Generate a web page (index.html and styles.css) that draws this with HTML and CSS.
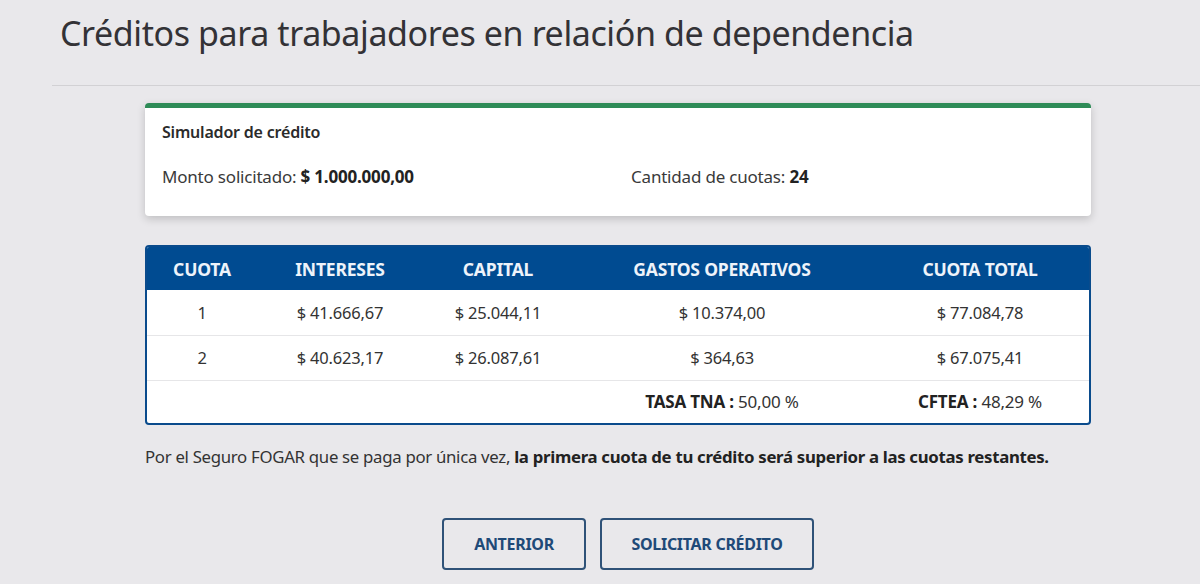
FILE: index.html
```html
<!DOCTYPE html>
<html lang="es">
<head>
<meta charset="utf-8">
<title>Créditos para trabajadores en relación de dependencia</title>
<link rel="stylesheet" href="styles.css">
</head>
<body>
<div class="page">
  <h1 class="title">Créditos para trabajadores en relación de dependencia</h1>
  <hr class="divider">
  <div class="content">
    <section class="card">
      <h2 class="card-title">Simulador de crédito</h2>
      <div class="card-row">
        <div class="field">Monto solicitado: <strong>$ 1.000.000,00</strong></div>
        <div class="field">Cantidad de cuotas: <strong>24</strong></div>
      </div>
    </section>

    <div class="table-wrap">
      <table class="plan">
        <thead>
          <tr>
            <th class="c1">CUOTA</th>
            <th class="c2">INTERESES</th>
            <th class="c3">CAPITAL</th>
            <th class="c4">GASTOS OPERATIVOS</th>
            <th class="c5">CUOTA TOTAL</th>
          </tr>
        </thead>
        <tbody>
          <tr>
            <td>1</td>
            <td>$ 41.666,67</td>
            <td>$ 25.044,11</td>
            <td>$ 10.374,00</td>
            <td>$ 77.084,78</td>
          </tr>
          <tr>
            <td>2</td>
            <td>$ 40.623,17</td>
            <td>$ 26.087,61</td>
            <td>$ 364,63</td>
            <td>$ 67.075,41</td>
          </tr>
          <tr class="totals">
            <td></td>
            <td></td>
            <td></td>
            <td><strong>TASA TNA :</strong> 50,00 %</td>
            <td><strong>CFTEA :</strong> 48,29 %</td>
          </tr>
        </tbody>
      </table>
    </div>

    <p class="note">Por el Seguro FOGAR que se paga por única vez, <strong>la primera cuota de tu crédito será superior a las cuotas restantes.</strong></p>

    <div class="actions">
      <button class="btn btn-prev" type="button">ANTERIOR</button>
      <button class="btn btn-next" type="button">SOLICITAR CRÉDITO</button>
    </div>
  </div>
</div>
</body>
</html>
```

FILE: styles.css
```css
* { box-sizing: border-box; }

html, body {
  margin: 0;
  padding: 0;
  background: #e9e8eb;
}

body {
  font-family: "Noto Sans", "Open Sans", sans-serif;
  color: #333;
}

.page {
  padding-left: 52px;
}

.title {
  margin: 0;
  padding: 10px 0 0 8px;
  height: 85px;
  font-size: 34px;
  font-weight: 400;
  color: #333236;
  letter-spacing: -0.4px;
}

.divider {
  margin: 0;
  border: 0;
  border-top: 1px solid #d2d1d4;
}

.content {
  width: 946px;
  margin-left: 93px;
  padding-top: 17px;
}

.card {
  background: #fff;
  border-top: 5px solid #2e8b57;
  border-radius: 4px;
  box-shadow: 0 3px 8px rgba(0,0,0,0.18);
  padding: 13px 17px 0 17px;
  height: 113px;
}

.card-title {
  margin: 0;
  font-size: 16px;
  font-weight: 600;
  color: #2b2b2b;
  letter-spacing: -0.2px;
}

.card-row {
  display: grid;
  grid-template-columns: 469px 1fr;
  margin-top: 22px;
  font-size: 17px;
  color: #3a3a3a;
  letter-spacing: -0.2px;
}

.card-row strong {
  font-weight: 700;
  color: #222;
}

.table-wrap {
  margin-top: 29px;
  border: 2px solid #0a4b8c;
  border-radius: 4px;
  overflow: hidden;
  background: #fff;
}

.plan {
  width: 100%;
  border-collapse: collapse;
  font-size: 16.5px;
  color: #333;
  letter-spacing: -0.2px;
}

.plan th {
  background: #004b91;
  color: #eef3fa;
  font-weight: 700;
  font-size: 17.5px;
  height: 43px;
  padding: 0;
  text-align: center;
}

.plan td {
  height: 45px;
  padding: 0;
  text-align: center;
  border-top: 1px solid #e6e6e8;
}

.plan tbody tr:first-child td { border-top: 0; }

.c1 { width: 110px; }
.c2 { width: 166px; }
.c3 { width: 150px; }
.c4 { width: 298px; }
.c5 { width: auto; }

.totals td { height: 43px; font-size: 17px; }
.totals strong { font-weight: 700; color: #222; }

.note {
  margin: 20px 0 0 0;
  font-size: 16.8px;
  color: #333;
  letter-spacing: -0.3px;
}

.note strong { font-weight: 700; color: #222; }

.actions {
  display: flex;
  justify-content: center;
  gap: 14px;
  margin-top: 50px;
  padding-left: 20px;
}

.btn {
  height: 52px;
  background: transparent;
  border: 2px solid #2f5278;
  border-radius: 4px;
  color: #1f4a78;
  font-family: inherit;
  font-weight: 700;
  font-size: 16px;
  letter-spacing: -0.3px;
}

.btn-prev { width: 144px; }
.btn-next { width: 214px; }
```
